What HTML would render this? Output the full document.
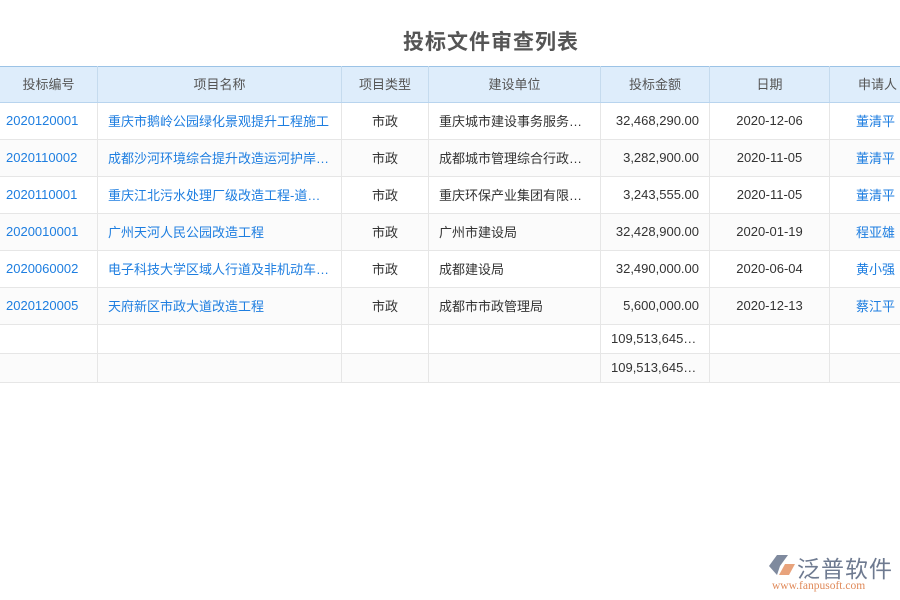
<!DOCTYPE html>
<html><head><meta charset="utf-8"><style>
*{margin:0;padding:0;box-sizing:border-box}
body{width:900px;height:600px;overflow:hidden;background:#fff;font-family:"Liberation Sans","Noto Sans CJK SC",sans-serif;position:relative}
.title{position:absolute;left:0;width:982px;top:26px;text-align:center;font-size:21px;font-weight:bold;color:#555;letter-spacing:1px}
table{position:absolute;left:-1px;top:66px;border-collapse:collapse;table-layout:fixed;width:926px;font-size:13px}
th{background:#deedfb;color:#555;font-weight:normal;height:36px;border:1px solid #c5dbee;border-top:1px solid #9cc3e6;border-bottom:1px solid #b8d4ee;padding-bottom:2px}
td{height:37px;border:1px solid #e6e6e6;color:#333;white-space:nowrap;overflow:hidden;text-overflow:ellipsis;padding:0 10px 2px}
tr.s td{height:29px;padding-bottom:1px}
tbody tr:nth-child(even) td{background:#fbfbfb}
.l{color:#1e7ee0}
.c{text-align:center}.r{text-align:right}
</style></head><body>
<div class="title">投标文件审查列表</div>
<table>
<colgroup><col style="width:98px"><col style="width:244px"><col style="width:87px"><col style="width:172px"><col style="width:109px"><col style="width:120px"><col style="width:96px"></colgroup>
<thead><tr><th>投标编号</th><th>项目名称</th><th>项目类型</th><th>建设单位</th><th>投标金额</th><th>日期</th><th>申请人</th></tr></thead>
<tbody>
<tr><td class="l" style="padding-left:6px;padding-right:4px">2020120001</td><td class="l">重庆市鹅岭公园绿化景观提升工程施工</td><td class="c">市政</td><td>重庆城市建设事务服务中心</td><td class="r">32,468,290.00</td><td class="c">2020-12-06</td><td class="l" style="padding-left:26px">董清平</td></tr>
<tr><td class="l" style="padding-left:6px;padding-right:4px">2020110002</td><td class="l">成都沙河环境综合提升改造运河护岸工程</td><td class="c">市政</td><td>成都城市管理综合行政执法局</td><td class="r">3,282,900.00</td><td class="c">2020-11-05</td><td class="l" style="padding-left:26px">董清平</td></tr>
<tr><td class="l" style="padding-left:6px;padding-right:4px">2020110001</td><td class="l">重庆江北污水处理厂级改造工程-道路施工</td><td class="c">市政</td><td>重庆环保产业集团有限公司</td><td class="r">3,243,555.00</td><td class="c">2020-11-05</td><td class="l" style="padding-left:26px">董清平</td></tr>
<tr><td class="l" style="padding-left:6px;padding-right:4px">2020010001</td><td class="l">广州天河人民公园改造工程</td><td class="c">市政</td><td>广州市建设局</td><td class="r">32,428,900.00</td><td class="c">2020-01-19</td><td class="l" style="padding-left:26px">程亚雄</td></tr>
<tr><td class="l" style="padding-left:6px;padding-right:4px">2020060002</td><td class="l">电子科技大学区域人行道及非机动车道改造</td><td class="c">市政</td><td>成都建设局</td><td class="r">32,490,000.00</td><td class="c">2020-06-04</td><td class="l" style="padding-left:26px">黄小强</td></tr>
<tr><td class="l" style="padding-left:6px;padding-right:4px">2020120005</td><td class="l">天府新区市政大道改造工程</td><td class="c">市政</td><td>成都市市政管理局</td><td class="r">5,600,000.00</td><td class="c">2020-12-13</td><td class="l" style="padding-left:26px">蔡江平</td></tr>
<tr class="s"><td></td><td></td><td></td><td></td><td class="r">109,513,645.00</td><td></td><td></td></tr>
<tr class="s"><td></td><td></td><td></td><td></td><td class="r">109,513,645.00</td><td></td><td></td></tr>
</tbody></table>
<div style="position:absolute;left:768px;top:553px;width:30px;height:26px">
<svg width="30" height="26" viewBox="0 0 30 26"><path d="M1 13 L9 2 L20 2 L12 13 L9 22 Z" fill="#7f8a9e"/><path d="M11 22 L17 11 L27 11 L21 22 Z" fill="#e8a37c"/></svg></div>
<div style="position:absolute;left:797px;top:550px;font-size:23px;color:#6e7a90;letter-spacing:1px;font-family:'Noto Sans CJK SC',sans-serif">泛普软件</div>
<div style="position:absolute;left:772px;top:580px;font-size:11.5px;color:#e08a5a;font-family:'Liberation Serif',serif">www.fanpusoft.com</div>
</body></html>
